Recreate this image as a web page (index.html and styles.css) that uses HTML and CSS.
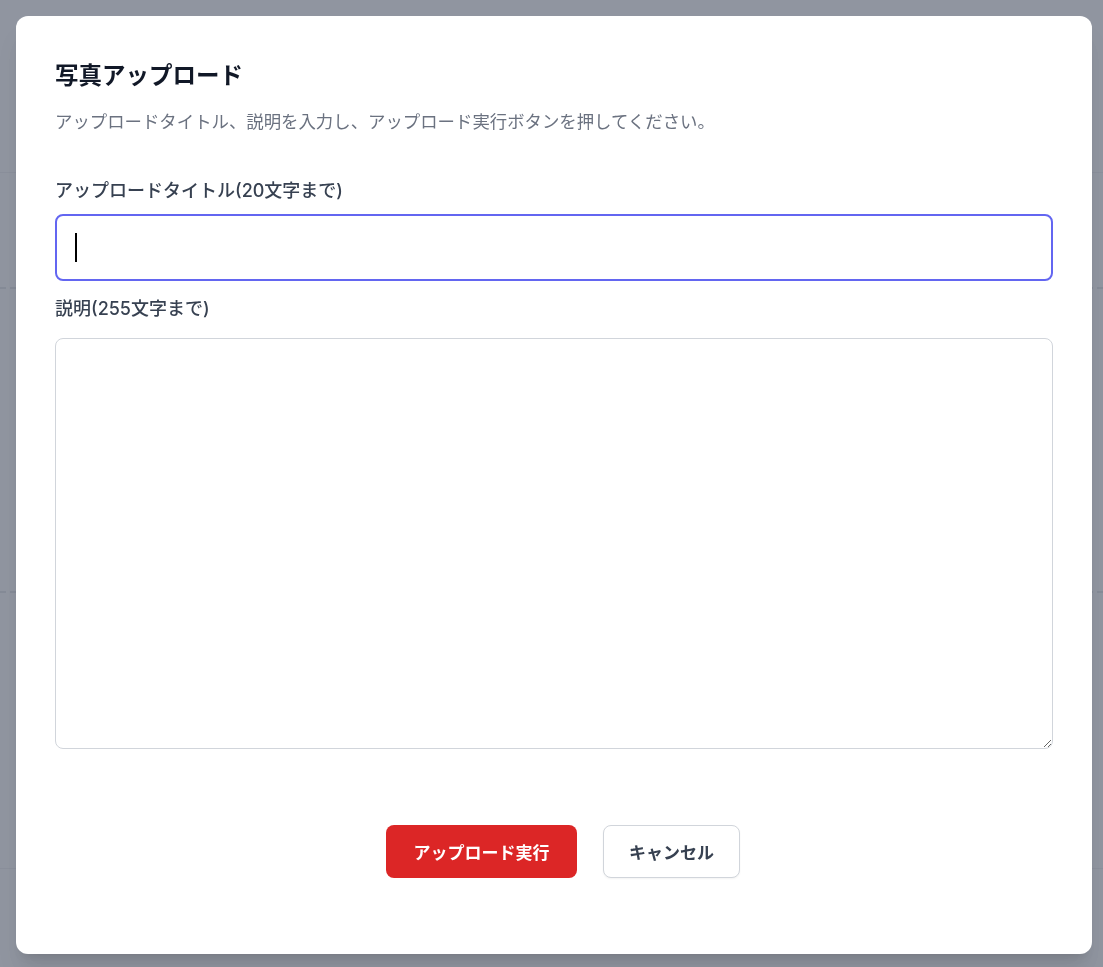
FILE: index.html
```html
<!DOCTYPE html>
<html lang="ja">
<head>
<meta charset="utf-8">
<title>写真アップロード</title>
<link rel="stylesheet" href="styles.css">
</head>
<body>
<div class="page">
  <div class="page-band"></div>
  <div class="page-row dashed"></div>
  <div class="page-gap"></div>
  <div class="page-row dashed"></div>
  <div class="page-rest"></div>
</div>
<div class="overlay">
  <div class="modal">
    <h1 class="title">写真アップロード</h1>
    <p class="subtitle">アップロードタイトル、説明を入力し、アップロード実行ボタンを押してください。</p>
    <label class="label label-first">アップロードタイトル(20文字まで)</label>
    <div class="input-wrap">
      <input class="input" type="text">
      <span class="caret"></span>
    </div>
    <label class="label label-second">説明(255文字まで)</label>
    <textarea class="textarea"></textarea>
    <div class="actions">
      <button class="btn btn-primary">アップロード実行</button>
      <button class="btn btn-secondary">キャンセル</button>
    </div>
  </div>
</div>
</body>
</html>
```
FILE: styles.css
```css
* { box-sizing: border-box; }
html, body { margin: 0; padding: 0; }
body {
  width: 1103px;
  height: 967px;
  overflow: hidden;
  background: #ffffff;
  font-family: Inter, "Noto Sans CJK JP", sans-serif;
}
.page {
  height: 967px;
  display: flex;
  flex-direction: column;
}
.page-band { height: 173px; border-bottom: 1px solid #e5e7eb; }
.page-row { height: 116px; }
.dashed { border-bottom: 2px dashed #d1d5db; }
.page-gap { height: 188px; }
.page-rest { height: 276px; border-bottom: 1px solid #e5e7eb; }

.overlay {
  position: fixed;
  inset: 0;
  background: rgba(107, 114, 128, 0.75);
  display: flex;
  align-items: flex-start;
  justify-content: flex-start;
  padding: 16px 0 0 16px;
}
.modal {
  width: 1076px;
  height: 938px;
  background: #ffffff;
  border-radius: 12px;
  box-shadow: 0 20px 25px -5px rgba(0,0,0,0.1), 0 8px 10px -6px rgba(0,0,0,0.1);
  padding: 40px 39px 0 39px;
  display: flex;
  flex-direction: column;
}
.title {
  margin: 0;
  font-size: 23.5px;
  line-height: 36px;
  font-weight: 600;
  color: #111827;
  font-family: "Noto Sans CJK JP", sans-serif;
}
.subtitle {
  margin: 16px 0 0 0;
  font-size: 17.4px;
  line-height: 26px;
  color: #6b7280;
  font-family: "Noto Sans CJK JP", sans-serif;
}
.label {
  display: block;
  font-size: 18px;
  line-height: 28px;
  font-weight: 500;
  color: #374151;
}
.label-first { margin-top: 43px; }
.label-second { margin-top: 14px; }
.input-wrap {
  position: relative;
  margin-top: 9px;
}
.input {
  display: block;
  width: 100%;
  height: 67px;
  border: 2px solid #6366f1;
  border-radius: 8px;
  outline: none;
  background: #fff;
  font-size: 18px;
  padding: 0 20px;
  caret-color: transparent;
}
.caret {
  position: absolute;
  left: 20px;
  top: 19px;
  width: 2px;
  height: 29px;
  background: #000;
}
.textarea {
  display: block;
  margin-top: 15px;
  width: 100%;
  height: 411px;
  border: 1px solid #d1d5db;
  border-radius: 8px;
  resize: vertical;
  outline: none;
  font-family: inherit;
  font-size: 16px;
  padding: 12px;
}
.actions {
  display: flex;
  justify-content: center;
  gap: 26px;
  margin-top: 76px;
  padding-left: 18px;
}
.btn {
  height: 53px;
  border-radius: 8px;
  font-family: "Noto Sans CJK JP", sans-serif;
  font-size: 17px;
  font-weight: 700;
  cursor: pointer;
}
.btn-primary {
  width: 191px;
  background: #dc2626;
  color: #ffffff;
  border: none;
}
.btn-secondary {
  width: 137px;
  background: #ffffff;
  color: #374151;
  border: 1px solid #d1d5db;
  box-shadow: 0 1px 2px rgba(0,0,0,0.05);
}
```
